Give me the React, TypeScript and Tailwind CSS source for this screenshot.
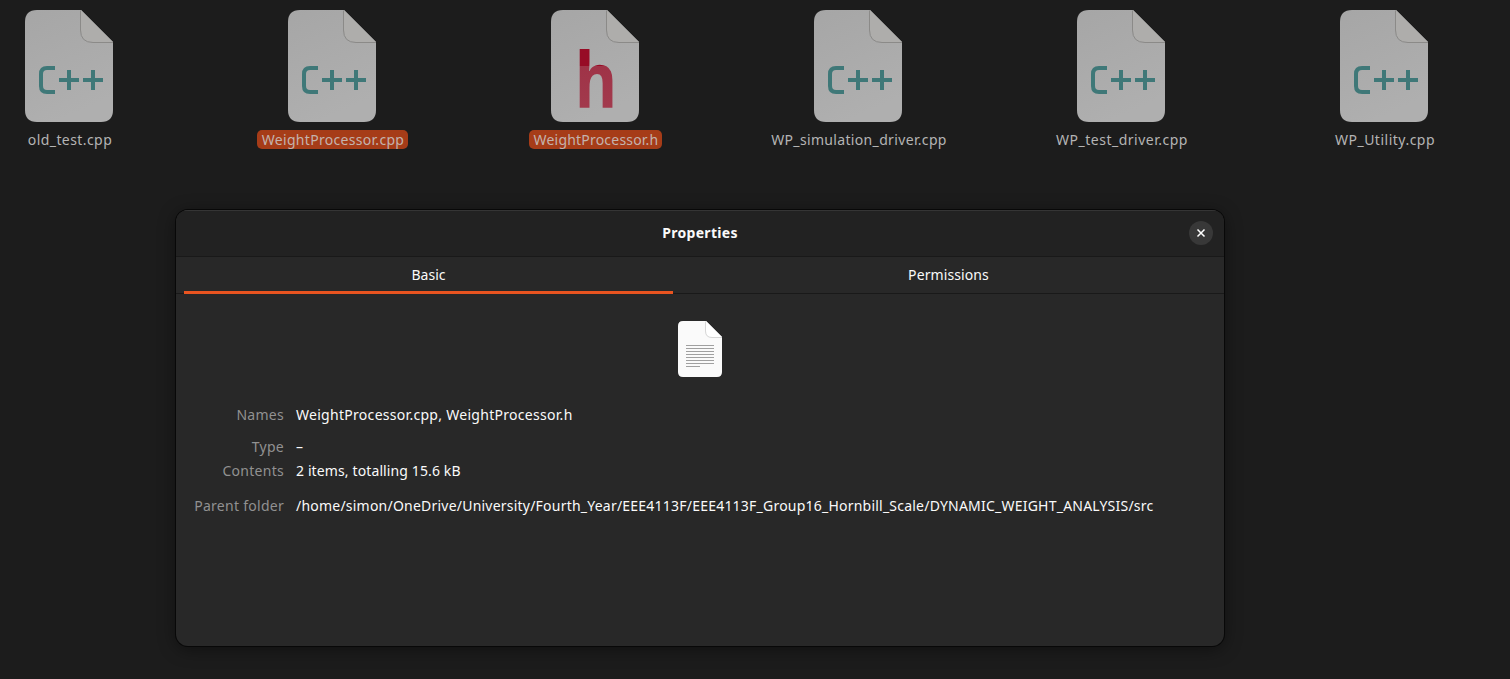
type FileKind = "cpp" | "header";

interface FileEntry {
  name: string;
  kind: FileKind;
  selected?: boolean;
  tracking: string;
}

const files: FileEntry[] = [
  { name: "old_test.cpp", kind: "cpp", tracking: "tracking-[0.42px]" },
  { name: "WeightProcessor.cpp", kind: "cpp", selected: true, tracking: "tracking-[0.3px]" },
  { name: "WeightProcessor.h", kind: "header", selected: true, tracking: "tracking-[0.2px]" },
  { name: "WP_simulation_driver.cpp", kind: "cpp", tracking: "tracking-[0.34px]" },
  { name: "WP_test_driver.cpp", kind: "cpp", tracking: "tracking-[0.5px]" },
  { name: "WP_Utility.cpp", kind: "cpp", tracking: "tracking-[0.5px]" },
];

function FileIcon({ kind }: { kind: FileKind }) {
  return (
    <svg viewBox="0 0 88 112" className="block h-[112px] w-[88px] shrink-0 overflow-visible">
      <defs>
        <linearGradient id="paper" x1="0" y1="0" x2="0.35" y2="1">
          <stop offset="0" stopColor="#a6a6a6" />
          <stop offset="1" stopColor="#afafaf" />
        </linearGradient>
        <linearGradient id="header-ink" gradientUnits="userSpaceOnUse" x1="0" y1="40" x2="0" y2="98">
          <stop offset="0" stopColor="#970c26" />
          <stop offset="0.276" stopColor="#970c26" />
          <stop offset="0.276" stopColor="#9f3347" />
          <stop offset="1" stopColor="#a23a4d" />
        </linearGradient>
      </defs>
      <path
        d="M12 0H56L88 32V100Q88 112 76 112H12Q0 112 0 100V12Q0 0 12 0Z"
        fill="url(#paper)"
      />
      <path d="M56 0L88 32H68Q56 32 56 20Z" fill="#aeadab" />
      <path d="M55.5 0.5V20Q55.5 32.5 68 32.5H88" fill="none" stroke="#8b8a88" />
      {kind === "cpp" ? (
        <g fill="none" stroke="#3f7878" strokeWidth="4">
          <path d="M30 58H22Q16 58 16 64V76Q16 82 22 82H30" />
          <path d="M34 70H54M44 60V80M58 70H78M68 60V80" />
        </g>
      ) : (
        <text
          x="24"
          y="98"
          textLength="42"
          lengthAdjust="spacingAndGlyphs"
          fill="url(#header-ink)"
          className="font-['Noto_Sans',sans-serif] text-[76.5px] font-bold"
        >
          h
        </text>
      )}
    </svg>
  );
}

function DocumentIcon() {
  return (
    <svg viewBox="0 0 44 56" className="block h-14 w-11">
      <path d="M5 0H28L44 16V51Q44 56 39 56H5Q0 56 0 51V5Q0 0 5 0Z" fill="#fafafa" />
      <path d="M28 0L44 16H34Q28 16 28 10Z" fill="#ffffff" />
      <path d="M27.5 0.5V10Q27.5 16.5 34 16.5H44" fill="none" stroke="#d6d6d6" />
      <path
        d="M8 24.5H36M8 27.5H36M8 30.5H36M8 33.5H36M8 36.5H36M8 39.5H36M8 42.5H36M8 45.5H22"
        stroke="#a0a0a0"
      />
    </svg>
  );
}

function FileItem({ file }: { file: FileEntry }) {
  return (
    <div className="flex flex-col items-center pt-[10px]">
      <FileIcon kind={file.kind} />
      <div
        className={`mt-2 ml-[2px] h-[19px] rounded-[5px] pr-1 pl-[5px] text-[14px] leading-[19px] whitespace-nowrap ${file.tracking} ${
          file.selected ? "bg-[#a63c18] text-[#c4b3ad]" : "text-[#b4b4b4]"
        }`}
      >
        {file.name}
      </div>
    </div>
  );
}

function Row({ label, value, height, tracking }: { label: string; value: string; height: string; tracking: string }) {
  return (
    <div className={`flex whitespace-nowrap leading-[20px] ${height}`}>
      <span className="mr-3 w-[108px] text-right tracking-[0.27px] text-[#919191]">{label}</span>
      <span className={`text-[#fafafa] ${tracking}`}>{value}</span>
    </div>
  );
}

function PropertiesDialog() {
  return (
    <section className="mt-[61px] ml-[176px] flex h-[436px] w-[1048px] flex-col overflow-hidden rounded-[12px] bg-[#282828] text-[14px] text-[#fafafa] shadow-[0_0_0_1px_#080808,0_3px_18px_rgba(0,0,0,0.45)]">
      <header className="grid h-[47px] shrink-0 grid-cols-[35px_1fr_35px] items-center border-t border-b border-t-[#353535] border-b-[#191919] bg-[#222222] pb-[2px]">
        <h1 className="col-start-2 text-center font-bold tracking-[0.3px]">Properties</h1>
        <button className="flex size-6 items-center justify-center rounded-full bg-[#383838]" aria-label="Close">
          <svg viewBox="0 0 10 10" className="size-[10px]">
            <path d="M1.5 1.5L8.5 8.5M8.5 1.5L1.5 8.5" stroke="#ffffff" strokeWidth="1.5" />
          </svg>
        </button>
      </header>
      <nav className="flex h-[37px] shrink-0 border-b border-[#191919] pl-2">
        <div className="-mb-px flex w-[489px] items-center justify-center border-b-[3px] border-[#e95420]">Basic</div>
        <div className="flex flex-1 items-center justify-center pb-[2px] tracking-[0.1px]">Permissions</div>
      </nav>
      <div className="mt-[27px] flex justify-center">
        <DocumentIcon />
      </div>
      <div className="mt-7">
        <Row label="Names" value="WeightProcessor.cpp, WeightProcessor.h" height="h-8" tracking="tracking-[0.29px]" />
        <Row label="Type" value="–" height="h-6" tracking="tracking-[0px]" />
        <Row label="Contents" value="2 items, totalling 15.6 kB" height="h-[35px]" tracking="tracking-[0.12px]" />
        <Row
          label="Parent folder"
          value="/home/simon/OneDrive/University/Fourth_Year/EEE4113F/EEE4113F_Group16_Hornbill_Scale/DYNAMIC_WEIGHT_ANALYSIS/src"
          height="h-5"
          tracking="tracking-[0.22px]"
        />
      </div>
    </section>
  );
}

export default function App() {
  return (
    <main className="h-screen overflow-hidden bg-[#1c1c1c] font-['Noto_Sans',sans-serif]">
      <div className="-ml-[63px] grid w-[1578px] grid-cols-[repeat(6,263px)]">
        {files.map((file) => (
          <FileItem key={file.name} file={file} />
        ))}
      </div>
      <PropertiesDialog />
    </main>
  );
}
